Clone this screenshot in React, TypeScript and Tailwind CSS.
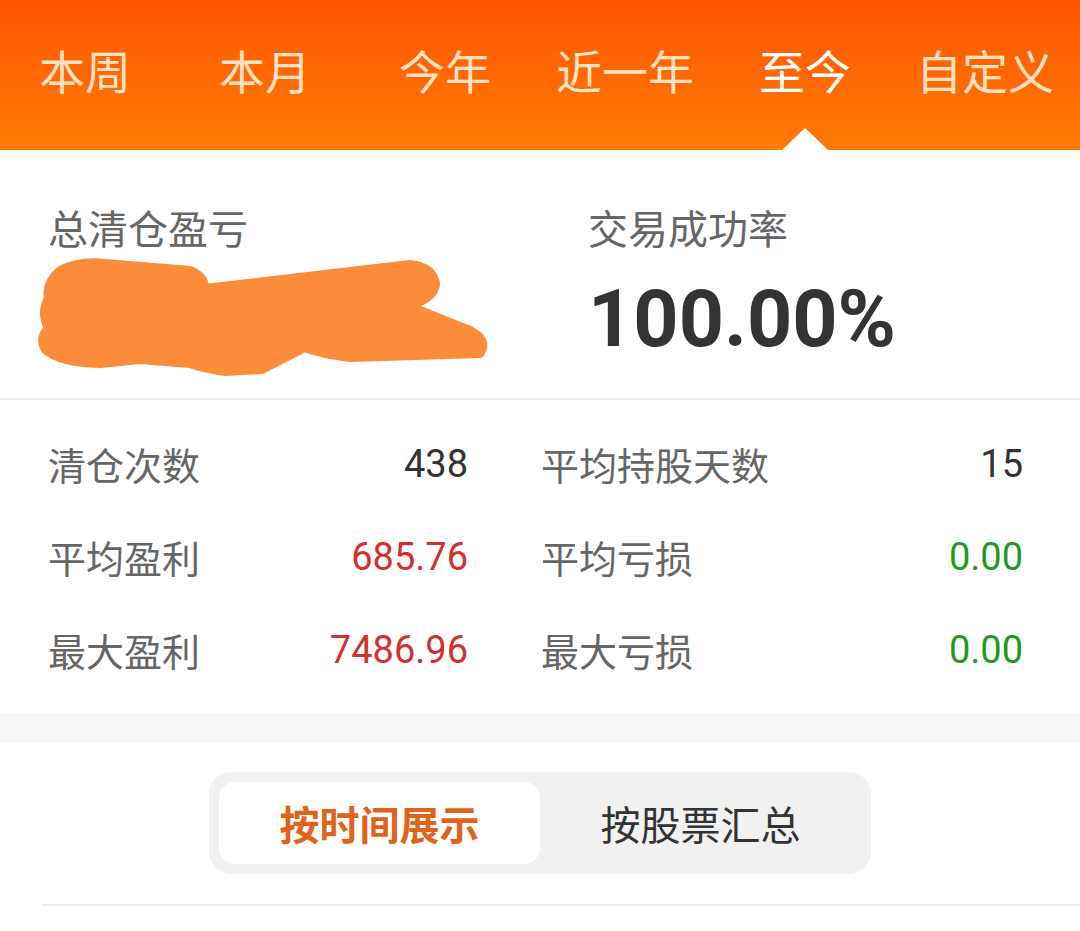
const tabs = ["本周", "本月", "今年", "近一年", "至今", "自定义"];
const active = 4;

const cjk = { fontFamily: '"Noto Sans CJK SC", "Noto Sans", sans-serif' };
const num = { fontFamily: 'Roboto, "Noto Sans CJK SC", sans-serif' };

type Stat = { label: string; value: string; tone: "plain" | "up" | "down" };

const left: Stat[] = [
  { label: "清仓次数", value: "438", tone: "plain" },
  { label: "平均盈利", value: "685.76", tone: "up" },
  { label: "最大盈利", value: "7486.96", tone: "up" },
];
const right: Stat[] = [
  { label: "平均持股天数", value: "15", tone: "plain" },
  { label: "平均亏损", value: "0.00", tone: "down" },
  { label: "最大亏损", value: "0.00", tone: "down" },
];

const toneClass = {
  plain: "text-[#333333]",
  up: "text-[#d2302f]",
  down: "text-[#1f9a1f]",
};

function StatRow({ s }: { s: Stat }) {
  return (
    <div className="flex h-[93px] items-center justify-between pb-[2px]">
      <span className="text-[38px] leading-none text-[#666666]" style={cjk}>
        {s.label}
      </span>
      <span className={`text-[38px] leading-none ${toneClass[s.tone]}`} style={num}>
        {s.value}
      </span>
    </div>
  );
}

export default function App() {
  return (
    <div className="h-[931px] w-[1080px] overflow-hidden bg-white" style={cjk}>
      {/* period tabs */}
      <div className="h-[150px] overflow-hidden bg-gradient-to-b from-[#ff5400] to-[#ff7a06]">
        <div className="-ml-[5px] grid h-full w-[1080px] grid-cols-6">
          {tabs.map((t, i) => (
            <div key={t} className="relative flex items-center justify-center pb-[12px]">
              <span
                className={`text-[46px] leading-none ${i === active ? "text-white" : "text-[#ffe2c4]"}`}
              >
                {t}
              </span>
              {i === active && (
                <div className="absolute bottom-0 left-1/2 h-0 w-0 -translate-x-1/2 border-x-[23px] border-b-[22px] border-x-transparent border-b-white" />
              )}
            </div>
          ))}
        </div>
      </div>

      {/* summary */}
      <div className="grid h-[248px] grid-cols-2 pt-[55px]">
        <div className="pl-[48px]">
          <div className="text-[40px] leading-[44px] text-[#666666]">总清仓盈亏</div>
          <svg className="-ml-[12px] mt-[7px]" width="454" height="120" viewBox="36 258 454 120">
            <path
              d="M60 272 Q80 262 105 265 L190 272 Q205 278 205 290 L410 266 Q432 268 436 285 Q436 300 410 308 L470 332 Q490 342 480 356 L350 360 Q320 356 305 350 L262 372 L225 374 Q200 370 190 366 L140 362 L100 366 Q60 365 45 352 Q38 340 48 330 Q40 315 48 300 Q45 285 60 272 Z"
              fill="#fb8c3b"
              stroke="#fb8c3b"
              strokeWidth="8"
              strokeLinejoin="round"
            />
          </svg>
        </div>
        <div className="pl-[48px]">
          <div className="text-[40px] leading-[44px] text-[#666666]">交易成功率</div>
          <div className="mt-[31px] text-[79px] font-bold leading-none text-[#333333]" style={num}>
            100.00%
          </div>
        </div>
      </div>

      {/* stats */}
      <div className="grid grid-cols-2 border-t-2 border-[#eeeeee] pb-[16px] pt-[18px]">
        <div className="pl-[48px] pr-[72px]">
          {left.map((s) => (
            <StatRow key={s.label} s={s} />
          ))}
        </div>
        <div className="pr-[57px] pl-[1px]">
          {right.map((s) => (
            <StatRow key={s.label} s={s} />
          ))}
        </div>
      </div>

      <div className="h-[30px] bg-[#f7f7f7]" />

      {/* view switch */}
      <div className="pt-[29px]">
        <div className="mx-auto flex h-[102px] w-[662px] rounded-[22px] bg-[#f1f1f1] p-[10px]">
          <div className="flex flex-1 items-center justify-center rounded-[16px] bg-white">
            <span className="text-[40px] font-bold leading-none text-[#e0631a]">按时间展示</span>
          </div>
          <div className="flex flex-1 items-center justify-center">
            <span className="text-[40px] leading-none text-[#333333]">按股票汇总</span>
          </div>
        </div>
        <div className="ml-[42px] mt-[30px] border-t-2 border-[#eeeeee]" />
      </div>
    </div>
  );
}
